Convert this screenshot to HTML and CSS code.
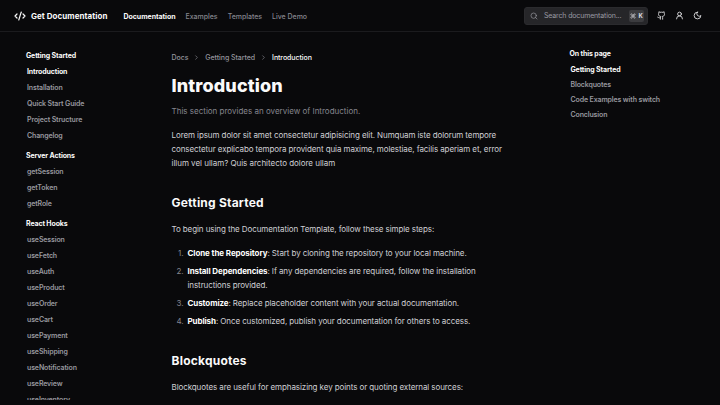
FILE: index.html
```html
<!DOCTYPE html>
<html lang="en">
<head>
<meta charset="utf-8">
<title>Introduction</title>
<link rel="stylesheet" href="styles.css">
</head>
<body>
<header class="topbar">
  <a class="brand">
    <svg class="icon brand-icon" viewBox="0 0 24 24"><path d="m18 16 4-4-4-4"/><path d="m6 8-4 4 4 4"/><path d="m14.5 4-5 16"/></svg>
    <span>Get Documentation</span>
  </a>
  <nav class="menu">
    <a class="active">Documentation</a>
    <a>Examples</a>
    <a>Templates</a>
    <a>Live Demo</a>
  </nav>
  <div class="search">
    <svg class="icon" viewBox="0 0 24 24"><circle cx="11" cy="11" r="8"/><path d="m21 21-4.3-4.3"/></svg>
    <span class="search-text">Search documentation...</span>
    <kbd><svg class="icon" viewBox="0 0 24 24"><path d="M15 6v12a3 3 0 1 0 3-3H6a3 3 0 1 0 3 3V6a3 3 0 1 0-3 3h12a3 3 0 1 0-3-3"/></svg><span>K</span></kbd>
  </div>
  <div class="actions">
    <svg class="icon" viewBox="0 0 24 24"><path d="M15 22v-4a4.8 4.8 0 0 0-1-3.5c3 0 6-2 6-5.5.08-1.25-.27-2.48-1-3.5.28-1.15.28-2.35 0-3.5 0 0-1 0-3 1.5-2.64-.5-5.36-.5-8 0C6 2 5 2 5 2c-.3 1.15-.3 2.35 0 3.5A5.4 5.4 0 0 0 4 9c0 3.5 3 5.5 6 5.5-.39.49-.68 1.05-.85 1.65S8.93 17.38 9 18v4"/><path d="M9 18c-4.51 2-5-2-7-2"/></svg>
    <svg class="icon" viewBox="0 0 24 24"><circle cx="12" cy="8" r="5"/><path d="M20 21a8 8 0 0 0-16 0"/></svg>
    <svg class="icon" viewBox="0 0 24 24"><path d="M12 3a6 6 0 0 0 9 9 9 9 0 1 1-9-9Z"/></svg>
  </div>
</header>
<div class="layout">
  <aside class="sidebar">
    <section>
      <h4>Getting Started</h4>
      <a class="active">Introduction</a>
      <a>Installation</a>
      <a>Quick Start Guide</a>
      <a>Project Structure</a>
      <a>Changelog</a>
    </section>
    <section>
      <h4>Server Actions</h4>
      <a>getSession</a>
      <a>getToken</a>
      <a>getRole</a>
    </section>
    <section>
      <h4>React Hooks</h4>
      <a>useSession</a>
      <a>useFetch</a>
      <a>useAuth</a>
      <a>useProduct</a>
      <a>useOrder</a>
      <a>useCart</a>
      <a>usePayment</a>
      <a>useShipping</a>
      <a>useNotification</a>
      <a>useReview</a>
      <a>useInventory</a>
    </section>
  </aside>
  <main class="content">
    <nav class="crumbs">
      <span>Docs</span>
      <svg class="icon" viewBox="0 0 24 24"><path d="m9 18 6-6-6-6"/></svg>
      <span>Getting Started</span>
      <svg class="icon" viewBox="0 0 24 24"><path d="m9 18 6-6-6-6"/></svg>
      <span class="current">Introduction</span>
    </nav>
    <h1>Introduction</h1>
    <p class="lead">This section provides an overview of Introduction.</p>
    <p class="intro">Lorem ipsum dolor sit amet consectetur adipisicing elit. Numquam iste dolorum tempore<br>consectetur explicabo tempora provident quia maxime, molestiae, facilis aperiam et, error<br><span class="last-line">illum vel ullam? Quis architecto dolore ullam</span></p>
    <h2>Getting Started</h2>
    <p>To begin using the Documentation Template, follow these simple steps:</p>
    <ol>
      <li><strong>Clone the Repository</strong>: Start by cloning the repository to your local machine.</li>
      <li><strong>Install Dependencies</strong>: If any dependencies are required, follow the installation<br>instructions provided.</li>
      <li><strong>Customize</strong>: Replace placeholder content with your actual documentation.</li>
      <li><strong>Publish</strong>: Once customized, publish your documentation for others to access.</li>
    </ol>
    <h2>Blockquotes</h2>
    <p>Blockquotes are useful for emphasizing key points or quoting external sources:</p>
  </main>
  <aside class="toc">
    <h3>On this page</h3>
    <a class="active">Getting Started</a>
    <a>Blockquotes</a>
    <a>Code Examples with switch</a>
    <a>Conclusion</a>
  </aside>
</div>
</body>
</html>
```

FILE: styles.css
```css
* { box-sizing: border-box; margin: 0; padding: 0; }
body {
  height: 405px;
  overflow: hidden;
  background: #09090b;
  color: #fafafa;
  font-family: Inter, "Liberation Sans", sans-serif;
  font-size: 7px;
  white-space: nowrap;
  -webkit-font-smoothing: antialiased;
}
.icon { display: block; flex: none; width: 8px; height: 8px; fill: none; stroke: currentColor; stroke-width: 2; stroke-linecap: round; stroke-linejoin: round; }
.topbar { display: flex; align-items: center; height: 32px; padding: 0 18.500px 0 14px; border-bottom: 1px solid #1b1b1e; }
.brand { display: flex; align-items: center; gap: 5px; width: 109.500px; font-size: 8px; font-weight: 700; letter-spacing: .05px; }
.brand-icon { width: 12px; height: 12px; stroke-width: 2.400; }
.menu { display: flex; gap: 10px; padding-top: 1px; color: #85858d; font-weight: 500; letter-spacing: -.02px; }
.menu .active { color: #fafafa; font-weight: 700; letter-spacing: -.04px; }
.search { display: flex; align-items: center; width: 124px; height: 18px; margin-left: auto; padding: 0 3px 0 5px; border: 1px solid #2b2b2e; border-radius: 3px; background: #262629; color: #9a9aa2; letter-spacing: -.15px; }
.search-text { margin-left: 6px; }
kbd { display: flex; align-items: center; justify-content: center; gap: 2px; width: 15px; height: 12px; margin-left: auto; border-radius: 2px; background: #3c3c3f; color: #dedee0; font: 700 6px Inter, sans-serif; }
kbd .icon { width: 6px; height: 6px; }
.actions { display: flex; gap: 9px; margin-left: 8.500px; color: #e4e4e7; }
.actions .icon { width: 9px; height: 9px; stroke-width: 2.300; }
.layout { display: flex; height: 368px; overflow: hidden; }
.sidebar { width: 171.500px; padding: 18px 0 0 26px; color: #98989f; font-weight: 600; letter-spacing: -.13px; }
.sidebar section { margin-bottom: 4px; }
h4, .sidebar a { display: block; height: 16px; line-height: 12px; font-size: 7px; }
h4 { color: #fafafa; font-weight: 700; }
.sidebar a { padding-left: 1px; }
.sidebar .active, .toc .active { color: #fafafa; font-weight: 700; }
.content { width: 398px; padding-top: 20px; color: #d0d0d4; font-size: 8px; line-height: 14px; letter-spacing: -.09px; }
.crumbs { display: flex; align-items: center; gap: 5px; height: 12px; font-size: 7px; font-weight: 500; letter-spacing: -.06px; color: #94949c; }
.crumbs .icon { width: 7px; height: 7px; margin-bottom: 2px; }
.crumbs .current { color: #fafafa; }
h1 { margin-top: 10px; color: #fafafa; font-size: 18px; font-weight: 800; line-height: 24px; letter-spacing: .12px; }
.lead { margin-top: 6px; color: #85858d; letter-spacing: 0; }
.intro { margin-top: 10px; }
.last-line { letter-spacing: -.03px; }
h2 { margin: 25px 0 11px; color: #fafafa; font-size: 12px; font-weight: 700; line-height: 16px; letter-spacing: .22px; }
ol { margin: 10px 0 0 16px; list-style: none; counter-reset: step; }
li { counter-increment: step; margin-bottom: 4px; }
li::before { content: counter(step) "."; display: inline-block; width: 12px; margin-left: -16px; margin-right: 4px; color: #85858d; text-align: right; }
strong { color: #fff; font-weight: 700; }
.toc { padding-top: 16px; color: #98989f; font-weight: 600; letter-spacing: -.13px; }
h3 { height: 16px; color: #fafafa; font-size: 7px; font-weight: 700; line-height: 12px; }
.toc a { display: block; height: 15px; padding-left: 1px; line-height: 12px; }
```
